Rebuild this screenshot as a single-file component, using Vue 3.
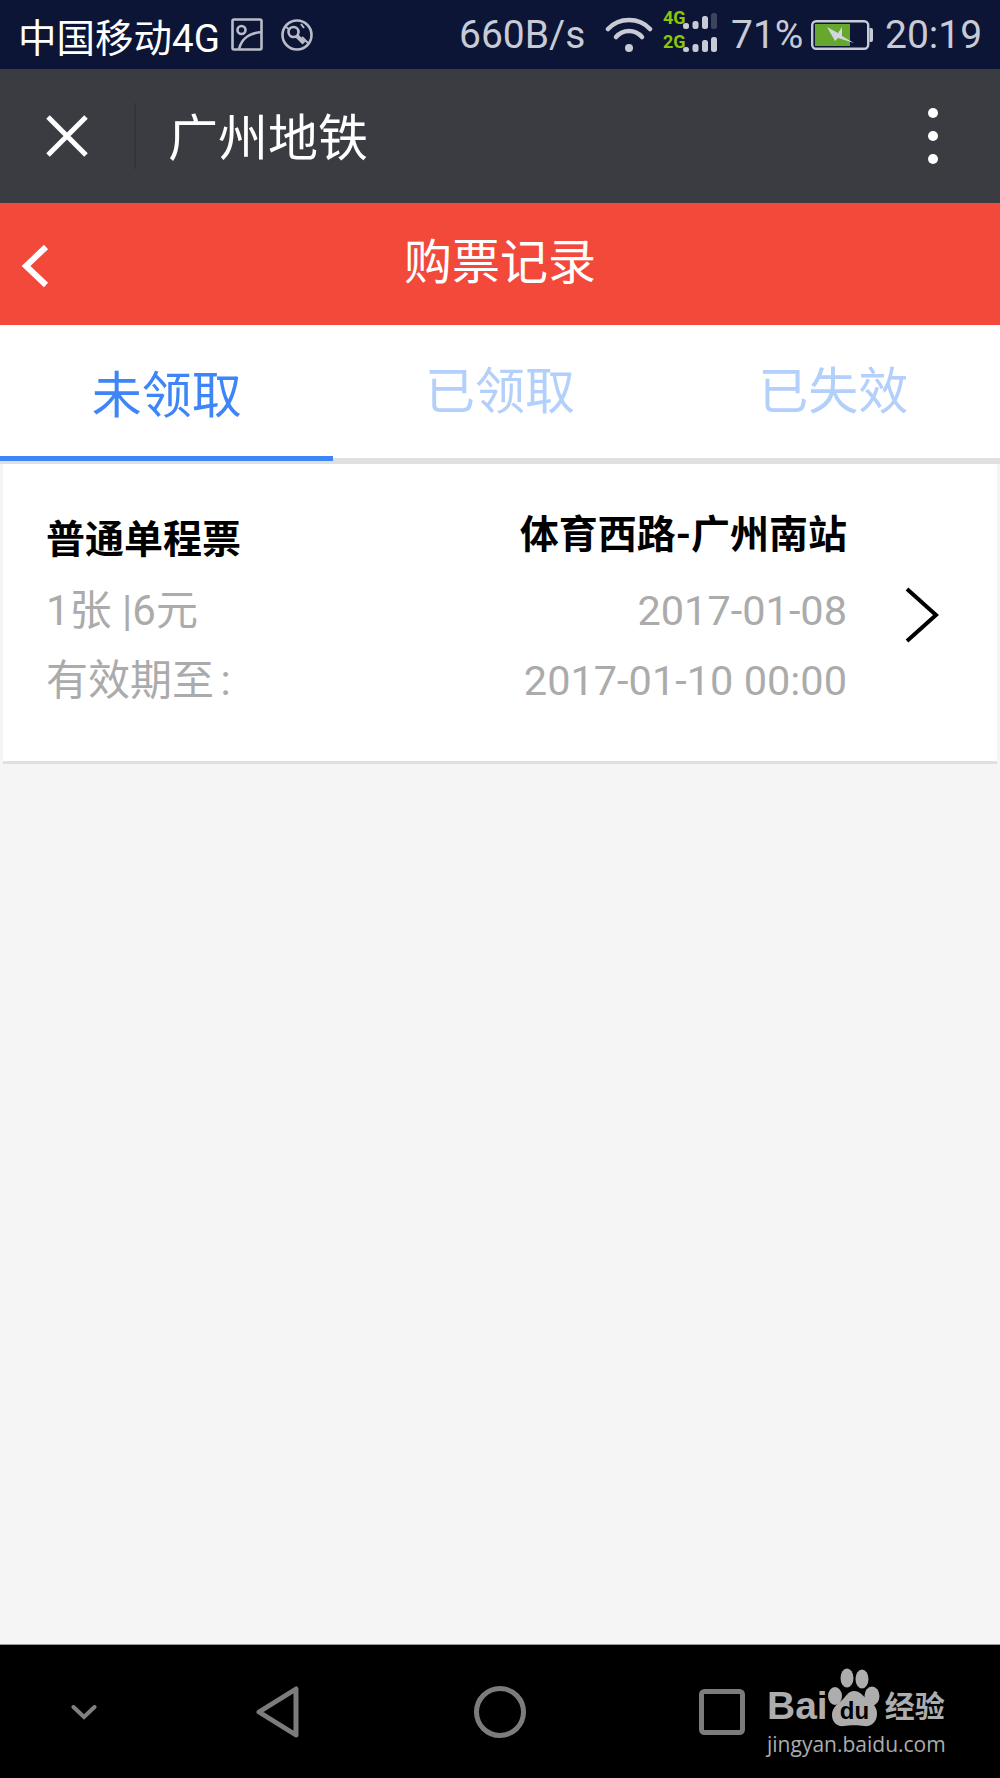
<script setup>
const tabs = [
  { label: '未领取', active: true },
  { label: '已领取', active: false },
  { label: '已失效', active: false },
]
const signalTop = [[0, 26], [9.5, 24], [19, 19], [28, 16]]
const signalBottom = [[0, 50], [9.5, 47], [19, 43], [28, 40]]
</script>

<template>
  <div class="screen">
    <div class="status-bar">
      <span class="carrier">中国移动4G</span>
      <svg class="ic-image" width="32" height="33" viewBox="0 0 32 33" fill="none" stroke="#b9bcc8" stroke-width="2.6">
        <rect x="1.5" y="1.5" width="29" height="30" rx="1.5" />
        <circle cx="10.5" cy="12" r="4" />
        <path d="M8 31C11 20 18 15 31 14" />
      </svg>
      <svg class="ic-key" width="32" height="32" viewBox="0 0 32 32" fill="none" stroke="#b9bcc8" stroke-width="2.6">
        <circle cx="16" cy="16" r="14.5" />
        <circle cx="12.5" cy="13" r="5" />
        <path d="M16 17L23 24" stroke-width="4" />
        <path d="M5 8L9 11M21 18L27 24M20 5L23 9" stroke-width="2" />
      </svg>
      <span class="speed">660B/s</span>
      <svg class="ic-wifi" width="48" height="38" viewBox="0 0 48 38" fill="none" stroke="#c8cbd5" stroke-width="4.5" stroke-linecap="round">
        <path d="M3 13C14 1 34 1 45 13" />
        <path d="M11 21C18 13 30 13 37 21" />
        <circle cx="24" cy="32" r="4" fill="#c8cbd5" stroke="none" />
      </svg>
      <div class="signal">
        <span class="net net-top">4G</span>
        <span class="net net-bottom">2G</span>
        <svg class="bars" width="36" height="44" viewBox="0 0 36 44">
          <rect v-for="(b, i) in signalTop" :key="'t' + i" :x="b[0] + 1" :y="b[1] - 14" width="6" :height="32 - b[1]" rx="2.5" :fill="i === 3 ? '#3d4460' : '#c8cbd5'" />
          <rect v-for="(b, i) in signalBottom" :key="'b' + i" :x="b[0] + 1" :y="b[1] - 14" width="6" :height="55 - b[1]" rx="2.5" fill="#c8cbd5" />
        </svg>
      </div>
      <span class="percent">71%</span>
      <svg class="ic-battery" width="62" height="30" viewBox="0 0 62 30" fill="none">
        <rect x="1.2" y="1.2" width="56" height="27.6" rx="4" stroke="#c8cbd5" stroke-width="2.4" />
        <path d="M58.5 8H60a2 2 0 0 1 2 2v10a2 2 0 0 1-2 2h-1.500z" fill="#c8cbd5" />
        <rect x="4" y="4" width="35" height="22" fill="#66a82e" />
        <path d="M16 7L27 13L31 7L31 16L43 23L27 18L24 21Z" fill="#d4d6dd" />
      </svg>
      <span class="clock">20:19</span>
    </div>

    <div class="title-bar">
      <svg class="ic-close" width="44" height="44" viewBox="0 0 44 44" stroke="#fff" stroke-width="5">
        <path d="M3 3L41 41M41 3L3 41" />
      </svg>
      <span class="divider"></span>
      <span class="app-name">广州地铁</span>
      <span class="kebab"><i></i><i></i><i></i></span>
    </div>

    <div class="page-head">
      <svg class="ic-back" width="28" height="44" viewBox="0 0 28 44" fill="none" stroke="#fff" stroke-width="6">
        <path d="M25 3L5 22L25 41" />
      </svg>
      <span class="page-title">购票记录</span>
    </div>

    <div class="tabs">
      <div v-for="tab in tabs" :key="tab.label" class="tab" :class="{ active: tab.active }">{{ tab.label }}</div>
    </div>

    <div class="content">
      <div class="card">
        <div class="col-left">
          <div class="row strong">普通单程票</div>
          <div class="row muted">1张 |6元</div>
          <div class="row muted validity">有效期至 :</div>
        </div>
        <div class="col-right">
          <div class="row strong route">体育西路-广州南站</div>
          <div class="row muted num">2017-01-08</div>
          <div class="row muted num">2017-01-10 00:00</div>
        </div>
        <svg class="ic-next" width="34" height="56" viewBox="0 0 34 56" fill="none" stroke="#000" stroke-width="4">
          <path d="M2 2L31 28L2 54" />
        </svg>
      </div>
    </div>

    <div class="nav-bar">
      <svg class="nav-down" width="26" height="16" viewBox="0 0 26 16" fill="none" stroke="#808080" stroke-width="4" stroke-linecap="round">
        <path d="M2.500 3L13 13L23.500 3" />
      </svg>
      <svg class="nav-back" width="44" height="52" viewBox="0 0 44 52" fill="none" stroke="#7c7c7c" stroke-width="5" stroke-linejoin="round">
        <path d="M3 26L40 3V49Z" />
      </svg>
      <svg class="nav-home" width="52" height="52" viewBox="0 0 52 52" fill="none" stroke="#7c7c7c" stroke-width="5">
        <circle cx="26" cy="26" r="23.500" />
      </svg>
      <svg class="nav-recent" width="46" height="46" viewBox="0 0 46 46" fill="none" stroke="#7c7c7c" stroke-width="5">
        <rect x="2.500" y="2.500" width="41" height="41" rx="3" />
      </svg>

      <div class="watermark">
        <div class="wm-top">
          <span class="wm-bai">Bai</span>
          <svg class="wm-paw" width="56" height="64" viewBox="0 0 56 64">
            <ellipse cx="8" cy="29" rx="7" ry="9" fill="#adadad" />
            <ellipse cx="20" cy="11" rx="6.500" ry="9.500" fill="#adadad" />
            <ellipse cx="35" cy="12" rx="6.500" ry="9.500" fill="#adadad" />
            <ellipse cx="45" cy="29" rx="7.500" ry="9.500" fill="#adadad" />
            <path d="M27 24C33 24 36 29 41 33C47 37 50 41 50 47C50 55 44 60 37 59C32 58 22 58 17 59C10 60 5 55 5 48C5 42 9 38 14 34C19 30 21 24 27 24Z" fill="#adadad" />
            <text x="27.500" y="52" text-anchor="middle" class="wm-du">du</text>
          </svg>
          <span class="wm-cn">经验</span>
        </div>
        <div class="wm-url">jingyan.baidu.com</div>
      </div>
    </div>
  </div>
</template>

<style scoped>
.screen {
  position: relative;
  display: flex;
  flex-direction: column;
  width: 1000px;
  height: 1778px;
  overflow: hidden;
  font-family: Roboto, "Noto Sans CJK SC", sans-serif;
}

.status-bar {
  display: flex;
  align-items: center;
  flex: none;
  height: 69px;
  padding-left: 18px;
  background: #0c1535;
  color: #c8cbd5;
  font-size: 39px;
}

.carrier {
  color: #fff;
  width: 213px;
  font-size: 38.5px;
  white-space: nowrap;
}

.ic-key {
  margin-left: 18px;
}

.speed {
  margin-left: 146px;
  width: 128px;
}

.ic-wifi {
  margin-left: 18px;
}

.signal {
  position: relative;
  width: 54px;
  height: 44px;
  margin-left: 10px;
  align-self: flex-start;
  margin-top: 11px;
}

.net {
  position: absolute;
  left: 0;
  color: #8ac70b;
  font-size: 18px;
  line-height: 14px;
  font-weight: 700;
}

.net-top {
  top: 0;
}

.net-bottom {
  top: 24px;
}

.bars {
  position: absolute;
  left: 19px;
  top: 0;
}

.percent {
  margin-left: 14px;
  width: 73px;
}

.ic-battery {
  margin-left: 7px;
}

.clock {
  margin-left: 12px;
}

.title-bar {
  display: flex;
  align-items: center;
  flex: none;
  height: 134px;
  padding-left: 45px;
  background: #3b3c42;
}

.divider {
  width: 2px;
  height: 66px;
  margin-left: 45px;
  background: #333438;
}

.app-name {
  margin-left: 32px;
  margin-bottom: 4px;
  color: #fff;
  font-size: 50px;
}

.kebab {
  display: flex;
  flex-direction: column;
  gap: 13px;
  margin-left: auto;
  margin-right: 62px;
}

.kebab i {
  width: 10px;
  height: 10px;
  border-radius: 50%;
  background: #fff;
}

.page-head {
  position: relative;
  display: flex;
  align-items: center;
  justify-content: center;
  flex: none;
  height: 122px;
  background: #f3493b;
}

.ic-back {
  position: absolute;
  left: 21px;
  top: 41px;
}

.page-title {
  margin-bottom: 12px;
  color: #fff;
  font-size: 48px;
}

.tabs {
  display: flex;
  flex: none;
  height: 139px;
  border-bottom: 6px solid #e0e0e0;
  background: #fff;
  box-sizing: border-box;
}

.tab {
  position: relative;
  flex: 1;
  padding-top: 31px;
  color: #b3d0fb;
  font-size: 50px;
  line-height: 72px;
  text-align: center;
}

.tab.active {
  padding-top: 35px;
  color: #3e85f8;
}

.tab.active::after {
  content: "";
  position: absolute;
  left: 0;
  right: 0;
  bottom: -3px;
  height: 5px;
  background: #3e85f8;
}

.content {
  flex: 1;
  padding: 0 3px;
  background: #f5f5f5;
}

.card {
  display: flex;
  align-items: center;
  box-sizing: border-box;
  height: 300px;
  padding: 0 58px 0 43px;
  border-bottom: 3px solid #e0e0e0;
  background: #fff;
}

.col-left {
  flex: 1;
  padding-top: 41px;
  align-self: flex-start;
}

.col-right {
  align-self: flex-start;
  padding-top: 36px;
  text-align: right;
}

.row {
  height: 70px;
  line-height: 72px;
  white-space: nowrap;
}

.strong {
  color: #000;
  font-size: 39px;
  font-weight: 700;
  line-height: 70px;
}

.muted {
  color: #ababab;
  font-size: 42px;
}

.validity {
  word-spacing: -4px;
}

.num {
  font-size: 41.5px;
}

.route {
  margin-bottom: 5px;
}

.ic-next {
  margin-left: 58px;
  margin-top: 4px;
}

.nav-bar {
  position: relative;
  display: flex;
  align-items: center;
  flex: none;
  box-sizing: border-box;
  height: 134px;
  padding-left: 71px;
  border-top: 1px solid #9a9a9a;
  background: #000;
}

.nav-down {
  margin-right: 159px;
}

.nav-back {
  margin-right: 174px;
}

.nav-home {
  margin-right: 173px;
}

.watermark {
  position: absolute;
  left: 767px;
  top: 27px;
  color: #adadad;
}

.wm-top {
  display: flex;
  align-items: flex-end;
  height: 57px;
}

.wm-bai {
  font-family: "Liberation Sans", sans-serif;
  font-size: 39px;
  font-weight: 700;
  line-height: 47px;
}

.wm-paw {
  margin-left: -1px;
  margin-bottom: -2px;
}

.wm-du {
  fill: #000;
  font-family: "Liberation Sans", sans-serif;
  font-size: 24px;
  font-weight: 700;
}

.wm-cn {
  margin-left: 2px;
  font-size: 30px;
  font-weight: 700;
  line-height: 44px;
}

.wm-url {
  font-family: "Open Sans", sans-serif;
  font-size: 21px;
  line-height: 30px;
  white-space: nowrap;
}
</style>
